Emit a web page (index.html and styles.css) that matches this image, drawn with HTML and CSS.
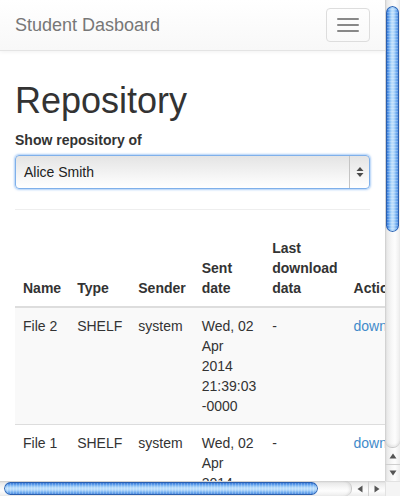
FILE: index.html
```html
<!DOCTYPE html>
<html>
<head>
<meta charset="utf-8">
<title>Student Dasboard</title>
<link rel="stylesheet" href="styles.css">
</head>
<body>
<div class="window">
  <div class="viewport">
    <nav class="navbar">
      <span class="brand">Student Dasboard</span>
      <button class="toggle" type="button" aria-label="Toggle navigation">
        <span class="bar"></span><span class="bar"></span><span class="bar"></span>
      </button>
    </nav>
    <div class="container">
      <h1 class="title">Repository</h1>
      <label class="label">Show repository of</label>
      <div class="select">
        <span class="select-text">Alice Smith</span>
        <span class="select-arrows">
          <svg width="8" height="12" viewBox="0 0 8 12"><path d="M4 1 L7.5 5 L0.5 5 Z M4 11 L7.5 7 L0.5 7 Z" fill="#4a4a4a"/></svg>
        </span>
      </div>
      <hr class="rule">
      <table class="table">
        <thead>
          <tr><th>Name</th><th>Type</th><th>Sender</th><th>Sent date</th><th>Last download data</th><th>Actions</th></tr>
        </thead>
        <tbody>
          <tr class="odd"><td>File 2</td><td>SHELF</td><td>system</td><td>Wed, 02 Apr 2014 21:39:03 -0000</td><td>-</td><td><a class="link" href="#">download</a></td></tr>
          <tr><td>File 1</td><td>SHELF</td><td>system</td><td>Wed, 02 Apr 2014 21:39:03 -0000</td><td>-</td><td><a class="link" href="#">download</a></td></tr>
        </tbody>
      </table>
    </div>
  </div>
  <div class="vscroll">
    <div class="vtrack"><div class="vthumb"></div></div>
    <div class="varrows">
      <div class="varrow up"><svg width="8" height="6" viewBox="0 0 8 6"><path d="M4 0.5 L7.5 5.5 L0.5 5.5 Z" fill="#555"/></svg></div>
      <div class="varrow down"><svg width="8" height="6" viewBox="0 0 8 6"><path d="M4 5.5 L7.5 0.5 L0.5 0.5 Z" fill="#555"/></svg></div>
    </div>
  </div>
  <div class="hscroll">
    <div class="htrack"><div class="hthumb"></div></div>
    <div class="harrows">
      <div class="harrow left"><svg width="6" height="8" viewBox="0 0 6 8"><path d="M0.5 4 L5.5 0.5 L5.5 7.5 Z" fill="#555"/></svg></div>
      <div class="harrow right"><svg width="6" height="8" viewBox="0 0 6 8"><path d="M5.5 4 L0.5 0.5 L0.5 7.5 Z" fill="#555"/></svg></div>
    </div>
  </div>
  <div class="corner"></div>
</div>
</body>
</html>
```

FILE: styles.css
```css
html, body {
  margin: 0;
  padding: 0;
  overflow: hidden;
  background: #fff;
}
body {
  font-family: "Liberation Sans", Helvetica, Arial, sans-serif;
  font-size: 14px;
  line-height: 20px;
  color: #333;
}
.window {
  display: grid;
  grid-template-columns: 385px 15px;
  grid-template-rows: 481px 15px;
  width: 400px;
  height: 496px;
}
.viewport {
  overflow: hidden;
  background: #fff;
}
.navbar {
  display: flex;
  justify-content: space-between;
  align-items: flex-start;
  width: 385px;
  height: 50px;
  box-sizing: content-box;
  border-bottom: 1px solid #e4e4e4;
  background: linear-gradient(to bottom, #ffffff 0%, #f8f8f8 100%);
  box-shadow: 0 1px 4px rgba(0,0,0,0.06);
}
.brand {
  padding: 15px;
  font-size: 18px;
  line-height: 20px;
  color: #777;
}
.toggle {
  margin: 8px 15px 0 0;
  width: 44px;
  height: 34px;
  padding: 9px 10px;
  box-sizing: border-box;
  border: 1px solid #ddd;
  border-radius: 4px;
  background: transparent;
  display: flex;
  flex-direction: column;
  gap: 4px;
}
.bar {
  display: block;
  width: 22px;
  height: 2px;
  border-radius: 1px;
  background: #888;
}
.container {
  padding: 0 15px;
  width: 355px;
}
.title {
  margin: 30px 0 9px;
  font-size: 36px;
  line-height: 39.6px;
  font-weight: 500;
  color: #333;
}
.label {
  display: inline-block;
  margin-bottom: 5px;
  font-weight: bold;
}
.select {
  display: flex;
  height: 34px;
  box-sizing: border-box;
  border: 1px solid #7fb0ea;
  border-radius: 4px;
  box-shadow: 0 0 2px 1px rgba(110,170,240,0.55);
  background: linear-gradient(to bottom, #e4e4e4 0%, #efefef 40%, #fafafa 80%, #ffffff 100%);
}
.select-text {
  flex: 1;
  padding: 0 8px;
  line-height: 32px;
  color: #222;
}
.select-arrows {
  width: 19px;
  border-left: 1px solid #c4c4c4;
  display: flex;
  align-items: center;
  justify-content: center;
}
.rule {
  margin: 20px 0 20px;
  border: 0;
  border-top: 1px solid #eee;
}
.table {
  width: 100%;
  border-collapse: collapse;
  border-spacing: 0;
}
.table th {
  text-align: left;
  vertical-align: bottom;
  padding: 8px;
  font-weight: bold;
  border-bottom: 2px solid #ddd;
}
.table td {
  vertical-align: top;
  padding: 8px;
  border-top: 1px solid #ddd;
}
.table .odd td {
  background: #f9f9f9;
}
.link {
  color: #428bca;
  text-decoration: none;
}

/* Aqua-style scrollbars */
.vscroll {
  display: flex;
  flex-direction: column;
  background: linear-gradient(to right, #cfcfcf 0, #e9e9e9 2px, #f8f8f8 7px, #fdfdfd 10px, #ececec 15px);
}
.vtrack {
  flex: 1;
  padding: 6px 1px 0 1px;
  border-bottom: 1px solid #c9c9c9;
  border-radius: 0 0 7px 7px;
  box-shadow: inset 0 -2px 2px rgba(0,0,0,0.06);
}
.vthumb {
  height: 226px;
  border-radius: 7px;
  box-shadow: inset 0 0 0 1px #2b5fae;
  background:
    repeating-linear-gradient(to bottom, rgba(255,255,255,0.22) 0 1px, rgba(255,255,255,0) 1px 3px),
    linear-gradient(to right, #2a62c0 0, #4b8fe6 2px, #8cc1f6 4px, #bfe0fc 6px, #b2d8fb 8px, #7ab3f0 10px, #3b7bd8 13px);
}
.varrows {
  height: 33px;
  display: flex;
  flex-direction: column;
}
.varrow {
  flex: 1;
  display: flex;
  align-items: center;
  justify-content: center;
}
.varrow.up {
  border-bottom: 1px solid #cfcfcf;
}
.hscroll {
  display: flex;
  background: linear-gradient(to bottom, #cfcfcf 0, #e9e9e9 2px, #f8f8f8 7px, #fdfdfd 10px, #ececec 15px);
}
.htrack {
  width: 352px;
  box-sizing: border-box;
  padding: 1px 0 1px 4px;
  border-right: 1px solid #c9c9c9;
  border-radius: 0 7px 7px 0;
  box-shadow: inset -2px 0 2px rgba(0,0,0,0.06);
}
.hthumb {
  width: 314px;
  height: 13px;
  border-radius: 7px;
  box-shadow: inset 0 0 0 1px #2b5fae;
  background:
    repeating-linear-gradient(to right, rgba(255,255,255,0.22) 0 1px, rgba(255,255,255,0) 1px 3px),
    linear-gradient(to bottom, #2a62c0 0, #4b8fe6 2px, #8cc1f6 4px, #bfe0fc 6px, #b2d8fb 8px, #7ab3f0 10px, #3b7bd8 13px);
}
.harrows {
  flex: 1;
  display: flex;
}
.harrow {
  flex: 1;
  display: flex;
  align-items: center;
  justify-content: center;
}
.harrow.left {
  border-right: 1px solid #cfcfcf;
}
.corner {
  background: #f4f4f4;
  border-top: 1px solid #e2e2e2;
  border-left: 1px solid #e2e2e2;
}
```
